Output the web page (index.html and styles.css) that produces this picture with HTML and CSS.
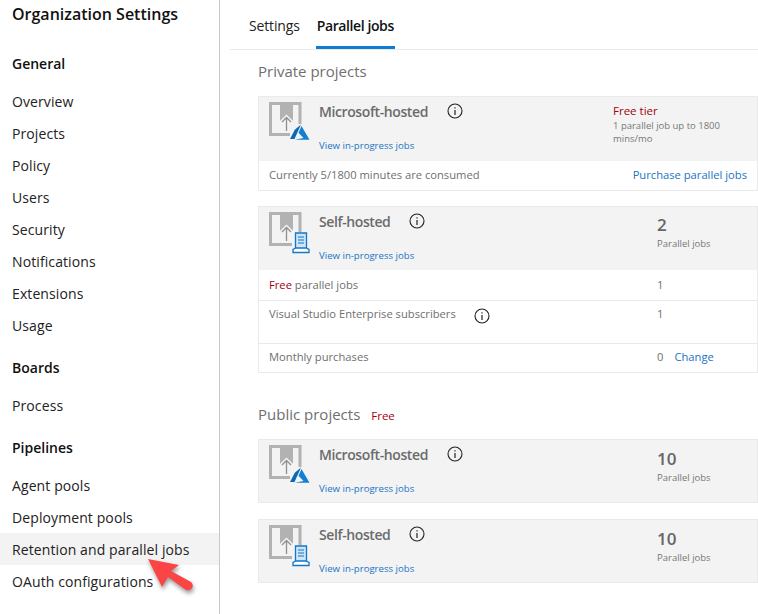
FILE: index.html
```html
<!DOCTYPE html>
<html lang="en">
<head>
<meta charset="utf-8">
<title>Organization Settings</title>
<link rel="stylesheet" href="styles.css">
</head>
<body>
<svg class="defs" width="0" height="0" aria-hidden="true">
  <defs>
    <symbol id="base" viewBox="0 0 34 36">
      <path d="M1.500 1.500H31V32.500H1.500Z" fill="none" stroke="#b2b2b2" stroke-width="3"/>
      <path d="M11 1H24V19L17.500 13L11 19Z" fill="#b2b2b2"/>
      <path d="M17.500 29V15M12.500 20L17.500 15L22.500 20" fill="none" stroke="#f3f3f3" stroke-width="3.500"/>
      <path d="M17.500 29V15.500M13 20L17.500 15.500L22 20" fill="none" stroke="#909090" stroke-width="1.300"/>
    </symbol>
    <symbol id="azure" viewBox="0 0 20 18">
      <path d="M-1 -1H21V19H-1Z" fill="#f3f3f3"/>
      <path d="M11 0.500L4.800 5.800L0 15H4.500Z" fill="#0a68b8"/>
      <path d="M11.500 2L8.500 8.800L13.500 14L4.800 15.800H19.500Z" fill="#1580d2"/>
    </symbol>
    <symbol id="agent" viewBox="0 0 18 22">
      <path d="M-1 -1H19V23H-1Z" fill="#f3f3f3"/>
      <path d="M3.500 1H14.500V17H3.500Z" fill="#cfe4f7" stroke="#1277c8" stroke-width="1.300"/>
      <path d="M6 5H12M6 8H12M6 11H12" stroke="#1277c8" stroke-width="1.200"/>
      <path d="M1 20.500V17.500L4 16H14L17 17.500V20.500Z" fill="#fff" stroke="#1277c8" stroke-width="1.300"/>
    </symbol>
    <symbol id="info" viewBox="0 0 16 16">
      <circle cx="8" cy="8" r="7" fill="none" stroke="#222" stroke-width="1.100"/>
      <path d="M8 7V12M8 4.200V5.600" stroke="#222" stroke-width="1.200"/>
    </symbol>
  </defs>
</svg>
<div class="page">
  <nav class="sidebar">
    <h1 class="title">Organization Settings</h1>
    <h2 class="group first">General</h2>
    <a class="item">Overview</a>
    <a class="item">Projects</a>
    <a class="item">Policy</a>
    <a class="item">Users</a>
    <a class="item">Security</a>
    <a class="item">Notifications</a>
    <a class="item">Extensions</a>
    <a class="item">Usage</a>
    <h2 class="group">Boards</h2>
    <a class="item">Process</a>
    <h2 class="group">Pipelines</h2>
    <a class="item">Agent pools</a>
    <a class="item">Deployment pools</a>
    <a class="item selected">Retention and parallel jobs</a>
    <a class="item">OAuth configurations</a>
    <svg class="arrow" width="50" height="40" viewBox="0 0 50 40" aria-hidden="true">
      <path d="M1 2L32 8L24 14L44 25Q47 28 45 31Q43 34 39 33L21 20L15 30Z" fill="#fb4444"/>
    </svg>
  </nav>
  <main class="content">
    <div class="tabs">
      <a class="tab">Settings</a>
      <a class="tab active">Parallel jobs</a>
    </div>
    <section class="section">
      <h2 class="section-title">Private projects</h2>
      <div class="card">
        <div class="card-head tall">
          <div class="pipe-icon">
            <svg class="ic-base"><use href="#base"/></svg>
            <svg class="ic-azure"><use href="#azure"/></svg>
          </div>
          <div class="head-main">
            <div class="head-name"><span>Microsoft-hosted</span><svg class="info"><use href="#info"/></svg></div>
            <a class="link small">View in-progress jobs</a>
          </div>
          <div class="head-side tier">
            <div class="free">Free tier</div>
            <div class="tier-note">1 parallel job up to 1800 mins/mo</div>
          </div>
        </div>
        <div class="row last">
          <span>Currently 5/1800 minutes are consumed</span>
          <a class="link push">Purchase parallel jobs</a>
        </div>
      </div>
      <div class="card">
        <div class="card-head">
          <div class="pipe-icon">
            <svg class="ic-base"><use href="#base"/></svg>
            <svg class="ic-agent"><use href="#agent"/></svg>
          </div>
          <div class="head-main">
            <div class="head-name"><span>Self-hosted</span><svg class="info"><use href="#info"/></svg></div>
            <a class="link small">View in-progress jobs</a>
          </div>
          <div class="head-side">
            <div class="count">2</div>
            <div class="count-label">Parallel jobs</div>
          </div>
        </div>
        <div class="row">
          <span class="row-label"><span class="free">Free</span> parallel jobs</span>
          <span class="row-value">1</span>
        </div>
        <div class="row tall-row">
          <span class="row-label">Visual Studio Enterprise subscribers<svg class="info row-info"><use href="#info"/></svg></span>
          <span class="row-value">1</span>
        </div>
        <div class="row last">
          <span class="row-label">Monthly purchases</span>
          <span class="row-value">0<a class="link change">Change</a></span>
        </div>
      </div>
    </section>
    <section class="section public">
      <h2 class="section-title">Public projects<span class="free free-badge">Free</span></h2>
      <div class="card plain">
        <div class="card-head">
          <div class="pipe-icon">
            <svg class="ic-base"><use href="#base"/></svg>
            <svg class="ic-azure"><use href="#azure"/></svg>
          </div>
          <div class="head-main">
            <div class="head-name"><span>Microsoft-hosted</span><svg class="info"><use href="#info"/></svg></div>
            <a class="link small">View in-progress jobs</a>
          </div>
          <div class="head-side">
            <div class="count">10</div>
            <div class="count-label">Parallel jobs</div>
          </div>
        </div>
      </div>
      <div class="card plain">
        <div class="card-head">
          <div class="pipe-icon">
            <svg class="ic-base"><use href="#base"/></svg>
            <svg class="ic-agent"><use href="#agent"/></svg>
          </div>
          <div class="head-main">
            <div class="head-name"><span>Self-hosted</span><svg class="info"><use href="#info"/></svg></div>
            <a class="link small">View in-progress jobs</a>
          </div>
          <div class="head-side">
            <div class="count">10</div>
            <div class="count-label">Parallel jobs</div>
          </div>
        </div>
      </div>
    </section>
  </main>
</div>
</body>
</html>
```
FILE: styles.css
```css
* { box-sizing: border-box; }
html, body { margin: 0; padding: 0; height: 100%; overflow: hidden; background: #fff; }
body { font-family: "Open Sans", "Noto Sans", sans-serif; color: #1f1f1f; }
.defs { position: absolute; }
.page { display: flex; width: 758px; height: 614px; }

.sidebar { position: relative; flex: 0 0 220px; border-right: 1px solid #c8c8c8; }
.title { margin: 0; padding: 3px 0 0 12px; height: 48px; font-size: 16px; line-height: 22px; font-weight: 600; color: #111; }
.group { margin: 0; height: 48px; padding: 15px 0 0 12px; line-height: 24px; font-size: 14px; font-weight: 600; color: #111; }
.group.first { height: 37px; padding-top: 4px; }
.item { display: block; height: 32px; line-height: 34px; padding-left: 12px; font-size: 14px; letter-spacing: 0.1px; color: #222; white-space: nowrap; }
.item.selected { background: #f3f3f3; }
.arrow { position: absolute; left: 147px; top: 557px; filter: drop-shadow(1px 3px 2px rgba(0, 0, 0, 0.4)); }

.content { flex: 1; min-width: 0; padding-left: 10px; }
.tabs { display: flex; gap: 16px; height: 50px; padding-left: 19px; border-bottom: 1px solid #eaeaea; }
.tab { height: 49px; padding-top: 16px; font-size: 14px; line-height: 20px; letter-spacing: -0.15px; color: #222; }
.tab.active { font-weight: 600; color: #111; letter-spacing: -0.4px; border-bottom: 3px solid #0c7cd5; padding-left: 1px; padding-right: 1px; }

.section { padding-left: 28px; }
.section-title { margin: 0; height: 46px; padding-top: 10px; font-size: 15px; line-height: 22px; font-weight: 400; color: #6f6f6f; }
.public .section-title { height: 51px; padding-top: 15px; }
.free-badge { margin-left: 11px; font-size: 11.500px; }
.free { color: #a4000f; }

.card { width: 500px; margin-bottom: 15px; border: 1px solid #eaeaea; font-size: 11.200px; color: #6f6f6f; }
.card.plain { margin-bottom: 16px; }
.card-head { display: flex; height: 63px; background: #f3f3f3; }
.card-head.tall { height: 64px; }
.plain .card-head { height: 62px; }
.pipe-icon { position: relative; flex: 0 0 60px; }
.ic-base { position: absolute; left: 10px; top: 5px; width: 34px; height: 36px; }
.ic-azure { position: absolute; left: 31px; top: 27px; width: 20px; height: 18px; }
.ic-agent { position: absolute; left: 33px; top: 25px; width: 18px; height: 22px; }
.head-main { flex: 1; display: flex; flex-direction: column; }
.head-name { display: flex; align-items: center; gap: 19px; height: 24px; margin-top: 2px; font-size: 14px; font-weight: 600; color: #6b6b6b; letter-spacing: -0.4px; }
.info { width: 16px; height: 16px; flex: none; }
.small { margin-top: 16px; font-size: 9.600px; line-height: 14px; }
.link { color: #1a73c5; }
.head-side { flex: 0 0 100px; padding-top: 6px; }
.head-side.tier { flex-basis: 144px; padding-top: 5px; }
.tier .free { font-size: 11.500px; line-height: 17px; }
.tier-note { font-size: 9.500px; line-height: 13px; color: #777; width: 120px; }
.count { font-size: 17px; line-height: 24px; font-weight: 600; color: #666; }
.count-label { font-size: 9.500px; line-height: 13px; color: #777; }
.plain .head-side { padding-top: 7px; }

.row { display: flex; align-items: center; height: 30px; padding: 0 10px 2px; border-top: 1px solid #eaeaea; }
.row.last { height: 29px; padding-bottom: 3px; }
.card-head + .row { border-top: 0; padding-bottom: 2px; }
.tall-row { height: 43px; align-items: flex-start; padding-top: 5px; }
.push { margin-left: auto; }
.row-label { flex: 0 0 388px; }
.row-info { margin-left: 18px; vertical-align: -6px; }
.change { margin-left: 11px; }
```
